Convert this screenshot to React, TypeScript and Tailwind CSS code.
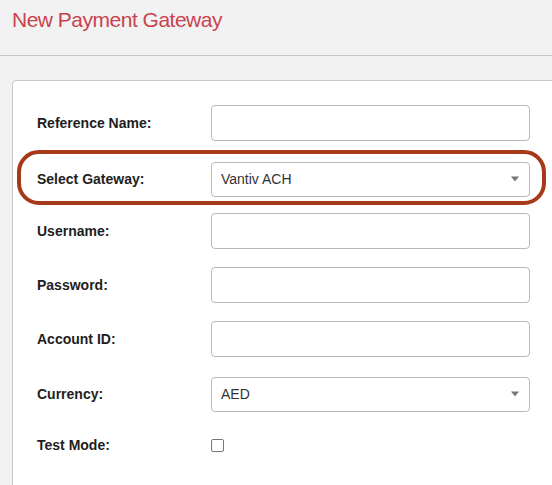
import React from 'react';

type Field = { label: string; kind: 'text' | 'select' | 'checkbox'; value?: string; mt?: string };

const fields: Field[] = [
  { label: 'Reference Name:', kind: 'text' },
  { label: 'Select Gateway:', kind: 'select', value: 'Vantiv ACH', mt: 'mt-[20px]' },
  { label: 'Username:', kind: 'text', mt: 'mt-[16px]' },
  { label: 'Password:', kind: 'text', mt: 'mt-[18px]' },
  { label: 'Account ID:', kind: 'text', mt: 'mt-[18px]' },
  { label: 'Currency:', kind: 'select', value: 'AED', mt: 'mt-[19px]' },
  { label: 'Test Mode:', kind: 'checkbox', mt: 'mt-[15px]' },
];

const Caret = () => (
  <svg width="8" height="6" viewBox="0 0 8 6" className="text-[#777]">
    <path d="M0 0.5 L8 0.5 L4 5.5 Z" fill="currentColor" />
  </svg>
);

const App: React.FC = () => {
  return (
    <div
      className="relative h-[485px] w-[552px] overflow-hidden bg-[#f2f2f2]"
      style={{ fontFamily: '"Liberation Sans", Arial, Helvetica, sans-serif' }}
    >
      {/* Header */}
      <div className="h-[56px] border-b border-[#c6c6c6] pl-[12px] pt-[8px]">
        <h1 className="text-[21px] leading-[24px] font-normal text-[#c9424f] tracking-[-0.5px]">
          New Payment Gateway
        </h1>
      </div>

      {/* Panel */}
      <div className="ml-[12px] mr-[-20px] mt-[24px] h-[500px] rounded-tl-[4px] border border-[#c8c8c8] bg-white pl-[24px] pt-[24px]">
        {fields.map((f) => (
          <div key={f.label} className={`flex h-[36px] items-center ${f.mt ?? ''}`}>
            <label className="w-[174px] shrink-0 text-[14px] font-bold text-[#1e1e1e]">{f.label}</label>
            {f.kind === 'text' && (
              <input
                type="text"
                className="h-[36px] w-[319px] rounded-[4px] border border-[#b9b9b9] bg-white px-[10px] text-[14px] outline-none"
              />
            )}
            {f.kind === 'select' && (
              <div className="flex h-[35px] w-[319px] items-center justify-between rounded-[4px] border border-[#b9b9b9] bg-white pl-[9px] pr-[10px] text-[14px] text-[#333]">
                <span>{f.value}</span>
                <Caret />
              </div>
            )}
            {f.kind === 'checkbox' && (
              <input
                type="checkbox"
                className="h-[13px] w-[13px] appearance-none rounded-[2px] border border-[#767676] bg-white"
              />
            )}
          </div>
        ))}
      </div>

      {/* Annotation highlight around Select Gateway */}
      <div className="pointer-events-none absolute left-[17px] top-[150px] h-[55px] w-[529px] rounded-[22px] border-[4px] border-[#a63a18]" />
    </div>
  );
};

export default App;
